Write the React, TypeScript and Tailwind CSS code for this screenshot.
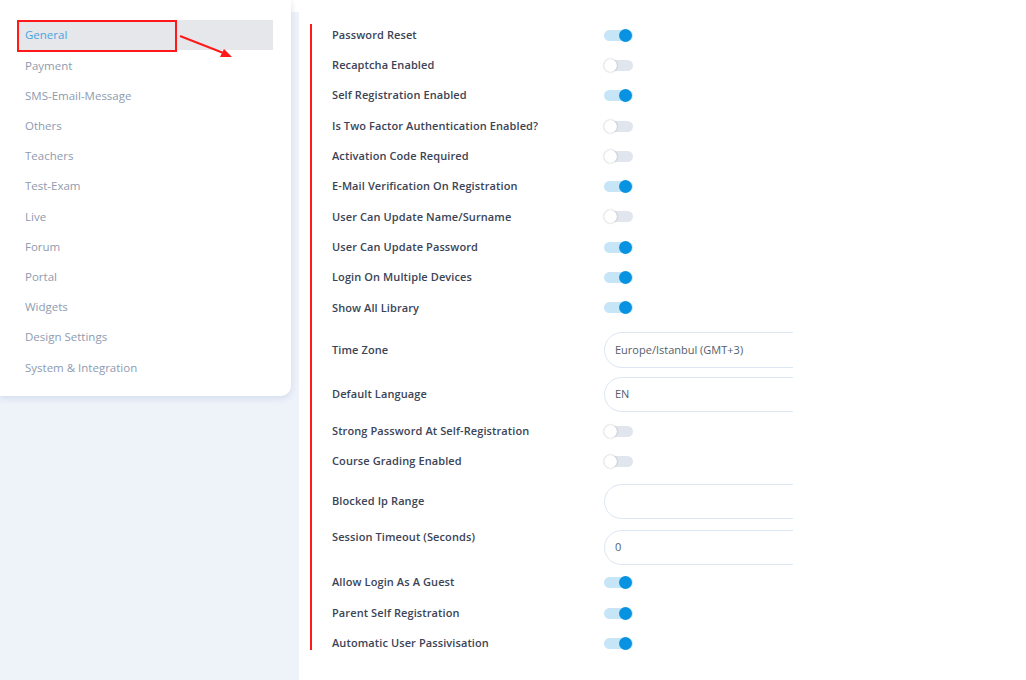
import React from "react";

const menu = [
  "General",
  "Payment",
  "SMS-Email-Message",
  "Others",
  "Teachers",
  "Test-Exam",
  "Live",
  "Forum",
  "Portal",
  "Widgets",
  "Design Settings",
  "System & Integration",
];

function Toggle({ on }: { on: boolean }) {
  return (
    <div className="relative w-[29px] h-[13px] flex items-center shrink-0">
      <div
        className={
          "w-[29px] h-[11px] rounded-full " + (on ? "bg-[#c6e6f8]" : "bg-[#e1e6ee]")
        }
      />
      {on ? (
        <div className="absolute right-[1px] top-0 w-[13px] h-[13px] rounded-full bg-[#0793e2]" />
      ) : (
        <div className="absolute left-0 top-0 w-[13px] h-[13px] rounded-full bg-white shadow-[0_0_2px_rgba(0,0,0,0.3)]" />
      )}
    </div>
  );
}

function ToggleRow({ label, on, cls = "" }: { label: string; on: boolean; cls?: string }) {
  return (
    <div className={"flex items-center h-[30.3px] " + cls}>
      <div className="w-[272px] shrink-0 text-[11px] font-semibold text-[#3b4456] tracking-[0.1px]">{label}</div>
      <Toggle on={on} />
    </div>
  );
}

function InputRow({
  label,
  value,
  cls = "",
  h = "h-[35px]",
  labelCls = "",
}: {
  label: string;
  value: string;
  cls?: string;
  h?: string;
  labelCls?: string;
}) {
  return (
    <div className={"flex items-center " + cls}>
      <div className={"w-[272px] shrink-0 text-[11px] font-semibold text-[#3b4456] tracking-[0.1px] " + labelCls}>{label}</div>
      <div
        className={
          "w-[320px] shrink-0 " +
          h +
          " rounded-full border border-[#dde6f3] bg-white flex items-center pl-[10px] text-[11px] text-[#555e6b]"
        }
      >
        {value}
      </div>
    </div>
  );
}

export default function App() {
  return (
    <div
      className="w-[1026px] h-[680px] bg-white flex overflow-hidden relative"
      style={{ fontFamily: '"Open Sans", "Noto Sans", sans-serif' }}
    >
      {/* Left column */}
      <div className="w-[299px] h-full shrink-0 bg-[linear-gradient(to_bottom,#ffffff_12px,#eef2f9_12px)]">
        <div className="w-[291px] h-[396px] bg-white rounded-br-[10px] shadow-[0_2px_6px_rgba(170,190,220,0.45)] pt-[20px] px-[18px]">
          {menu.map((m, i) => (
            <div
              key={m}
              className={
                "h-[30.2px] flex items-center pl-[7px] text-[11.5px] " +
                (i === 0 ? "bg-[#e5e7eb] text-[#4aa3df]" : "text-[#8e9bb0]")
              }
            >
              {m}
            </div>
          ))}
        </div>
      </div>

      {/* Main */}
      <div className="w-[494px] shrink-0 h-full overflow-hidden bg-white pl-[33px] pt-[20px]">
        <ToggleRow label="Password Reset" on />
        <ToggleRow label="Recaptcha Enabled" on={false} />
        <ToggleRow label="Self Registration Enabled" on />
        <ToggleRow label="Is Two Factor Authentication Enabled?" on={false} />
        <ToggleRow label="Activation Code Required" on={false} />
        <ToggleRow label="E-Mail Verification On Registration" on />
        <ToggleRow label="User Can Update Name/Surname" on={false} />
        <ToggleRow label="User Can Update Password" on />
        <ToggleRow label="Login On Multiple Devices" on />
        <ToggleRow label="Show All Library" on />
        <InputRow label="Time Zone" value="Europe/Istanbul (GMT+3)" cls="mt-[9px]" h="h-[36px]" />
        <InputRow label="Default Language" value="EN" cls="mt-[9px]" h="h-[35px]" />
        <ToggleRow label="Strong Password At Self-Registration" on={false} cls="mt-[4px]" />
        <ToggleRow label="Course Grading Enabled" on={false} />
        <InputRow label="Blocked Ip Range" value="" cls="mt-[7px]" h="h-[35px]" />
        <InputRow
          label="Session Timeout (Seconds)"
          value="0"
          cls="mt-[11px]"
          h="h-[35px]"
          labelCls="-mt-[20px]"
        />
        <ToggleRow label="Allow Login As A Guest" on cls="mt-[3px]" />
        <ToggleRow label="Parent Self Registration" on />
        <ToggleRow label="Automatic User Passivisation" on />
      </div>

      {/* Annotations */}
      <div className="absolute left-[17px] top-[20px] w-[160px] h-[32px] border-2 border-[#ff1a1a]" />
      <svg className="absolute left-0 top-0" width="300" height="80" viewBox="0 0 300 80">
        <line x1="180" y1="36" x2="226" y2="54" stroke="#ff1a1a" strokeWidth="2" />
        <polygon points="232,57 220,57 224,49" fill="#ff1a1a" />
      </svg>
      <div className="absolute left-[310px] top-[24px] w-[2px] h-[626px] bg-[#ff1a1a]" />
    </div>
  );
}
